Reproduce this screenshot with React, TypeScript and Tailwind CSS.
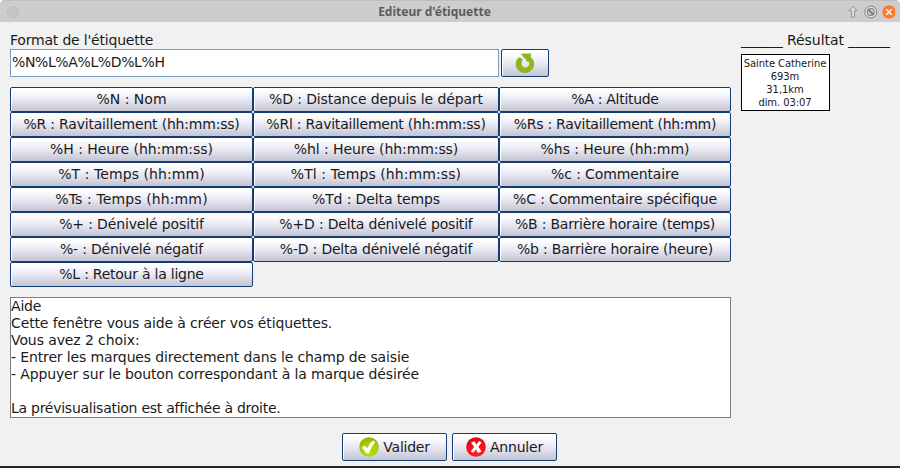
import type { ReactNode } from "react";

type Label = [text: string, tracking: string];

const COLUMNS: Label[][] = [
  [
    ["%N : Nom", ""],
    ["%R : Ravitaillement (hh:mm:ss)", "tracking-[-0.2px]"],
    ["%H : Heure (hh:mm:ss)", "tracking-[-0.05px]"],
    ["%T : Temps (hh:mm)", "tracking-[0.08px]"],
    ["%Ts : Temps (hh:mm)", "tracking-[0.12px]"],
    ["%+ : Dénivelé positif", "tracking-[-0.14px]"],
    ["%- : Dénivelé négatif", "tracking-[-0.2px]"],
    ["%L : Retour à la ligne", "tracking-[-0.24px]"],
  ],
  [
    ["%D : Distance depuis le départ", "tracking-[-0.12px]"],
    ["%Rl : Ravitaillement (hh:mm:ss)", "tracking-[-0.22px]"],
    ["%hl : Heure (hh:mm:ss)", "tracking-[-0.08px]"],
    ["%Tl : Temps (hh:mm:ss)", "tracking-[0.09px]"],
    ["%Td : Delta temps", "tracking-[-0.12px]"],
    ["%+D : Delta dénivelé positif", "tracking-[-0.18px]"],
    ["%-D : Delta dénivelé négatif", "tracking-[-0.2px]"],
  ],
  [
    ["%A : Altitude", "tracking-[-0.3px]"],
    ["%Rs : Ravitaillement (hh:mm)", "tracking-[-0.28px]"],
    ["%hs : Heure (hh:mm)", "tracking-[-0.08px]"],
    ["%c : Commentaire", "tracking-[-0.12px]"],
    ["%C : Commentaire spécifique", "tracking-[-0.15px]"],
    ["%B : Barrière horaire (temps)", "tracking-[-0.2px]"],
    ["%b : Barrière horaire (heure)", "tracking-[-0.2px]"],
  ],
];

const HELP: Label[] = [
  ["Aide", "tracking-[-0.2px]"],
  ["Cette fenêtre vous aide à créer vos étiquettes.", "tracking-[-0.13px]"],
  ["Vous avez 2 choix:", "tracking-[-0.1px]"],
  ["- Entrer les marques directement dans le champ de saisie", "tracking-[-0.13px]"],
  ["- Appuyer sur le bouton correspondant à la marque désirée", "tracking-[-0.13px]"],
  ["", ""],
  ["La prévisualisation est affichée à droite.", "tracking-[-0.26px]"],
];

function MetalButton({ className, children }: { className: string; children: ReactNode }) {
  return (
    <button
      className={`flex shrink-0 items-center justify-center whitespace-nowrap rounded-[2px] border border-[#133c75] bg-linear-to-b from-white from-10% via-[#e9e9f4] via-50% to-[#c4c4d2] shadow-[inset_1px_0_0_#fff] ${className}`}
    >
      {children}
    </button>
  );
}

function RefreshIcon() {
  return (
    <svg width="20" height="20" viewBox="0 0 20 20">
      <path
        d="M6.4 .9 L15.7 .7 L15.6 4.2 A9 8.8 0 1 1 3.6 4.8 Q5 4.4 7.6 6.6 Q6.2 8 6.3 10.4 A4.1 4.1 0 1 0 14.3 9.6 L12.9 8 L12 8.6 L10.6 5.6 L9 4.6 Z"
        fill="#8eb80f"
        stroke="#86a83a"
        strokeWidth=".5"
      />
    </svg>
  );
}

function ValidIcon() {
  return (
    <svg width="20" height="20" viewBox="0 0 20 20">
      <defs>
        <radialGradient id="green" cx=".55" cy=".85" r=".85">
          <stop offset="0" stopColor="#b6dc08" />
          <stop offset=".6" stopColor="#a8cf04" />
          <stop offset="1" stopColor="#8db600" />
        </radialGradient>
      </defs>
      <circle cx="10" cy="10" r="9.8" fill="url(#green)" />
      <path d="M2.9 10.7 L5.7 8.4 Q7.4 9.8 8.4 11.2 Q10.3 6.6 13.8 3.6 L16.3 4.9 Q12.2 9.6 9.8 16.4 H7 Q5.8 12.9 2.9 10.7 Z" fill="#fff" />
    </svg>
  );
}

function CancelIcon() {
  return (
    <svg width="20" height="20" viewBox="0 0 20 20">
      <defs>
        <radialGradient id="red" cx=".55" cy=".8" r=".8">
          <stop offset="0" stopColor="#ff2020" />
          <stop offset=".6" stopColor="#f51318" />
          <stop offset="1" stopColor="#d80b12" />
        </radialGradient>
      </defs>
      <circle cx="10" cy="10" r="9.8" fill="url(#red)" />
      <path d="M5.1 5.5 L8.3 4.2 L10.4 7.4 L13.1 4.1 L15.6 5.5 L12.4 9.8 L15.5 14.4 L12.2 16 L10 12.4 L7.2 15.8 L4.7 14.4 L8.1 9.9 Z" fill="#fff" />
    </svg>
  );
}

function TitleBar() {
  return (
    <header className="flex h-[22px] shrink-0 items-center rounded-t-[5px] border-t border-[#bebebe] bg-[#cdcdcd] pl-[7px] pr-[5px]">
      <span className="mt-px size-3 rounded-full border border-[#bdbdbd] bg-[#c4c4c4]" />
      <h1 className="flex-1 pl-[2px] text-center font-['Noto_Sans',sans-serif] text-[12px] leading-5 font-bold text-[#5c5c5c]">
        Editeur d'étiquette
      </h1>
      <div className="flex items-center">
        <svg width="47" height="14" viewBox="0 0 47 14">
          <path d="M5 1.2 L9 5.7 H6.5 V12 H3.5 V5.7 H1 Z" fill="#dedede" stroke="#929292" strokeLinejoin="round" />
          <circle cx="22.8" cy="7" r="6" fill="#dedede" stroke="#858585" />
          <circle cx="22.8" cy="7" r="3.4" fill="none" stroke="#858585" strokeWidth="1.2" />
          <path d="M20.2 4.4 L25.4 9.6" stroke="#858585" strokeWidth="2.2" />
          <circle cx="41" cy="7" r="6.8" fill="#fc7c2b" />
          <path d="M38.3 4.3 L43.7 9.7 M43.7 4.3 L38.3 9.7" stroke="#fff" strokeWidth="1.4" />
        </svg>
      </div>
    </header>
  );
}

export default function App() {
  return (
    <div className="h-[468px] w-[900px] overflow-hidden bg-white font-['DejaVu_Sans',sans-serif] text-[14px] text-[#1a1a1a]">
      <div className="flex h-full flex-col rounded-t-[5px] border-b-2 border-[#262628] bg-[#f1f1f1]">
        <TitleBar />
        <div className="flex h-[396px] shrink-0 gap-[10px] pl-[10px] pt-[10px]">
          <main className="w-[721px] shrink-0">
            <div className="h-[17px] leading-[17px] tracking-[-0.2px]">Format de l'étiquette</div>
            <div className="flex gap-[2px]">
              <div className="h-7 w-[489px] border border-[#7a99bf] bg-white pl-px leading-[25px] tracking-[-0.38px]">
                %N%L%A%L%D%L%H
              </div>
              <MetalButton className="h-7 w-12"><RefreshIcon /></MetalButton>
            </div>
            <div className="mt-[10px] grid h-[200px] grid-cols-[243px_246px_232px]">
              {COLUMNS.map((column, i) => (
                <div key={i} className="flex flex-col">
                  {column.map(([text, tracking]) => (
                    <MetalButton key={text} className={`h-[25px] leading-[23px] ${tracking}`}>{text}</MetalButton>
                  ))}
                </div>
              ))}
            </div>
            <div className="mt-[10px] h-[121px] border border-[#808080] bg-white leading-[17px]">
              {HELP.map(([text, tracking], i) => (
                <div key={i} className={`h-[17px] whitespace-nowrap ${tracking}`}>{text}</div>
              ))}
            </div>
          </main>
          <aside className="shrink-0">
            <div className="h-[22px] whitespace-nowrap leading-[17px] tracking-[-0.06px]">______ Résultat ______</div>
            <div className="h-[57px] w-[89px] border border-black bg-white pt-[2px] pr-px text-center text-[10px] leading-[13px] tracking-[-0.08px] whitespace-nowrap">
              <div>Sainte Catherine</div>
              <div>693m</div>
              <div>31,1km</div>
              <div>dim. 03:07</div>
            </div>
          </aside>
        </div>
        <footer className="mt-[15px] flex gap-[5px] pl-[342px]">
          <MetalButton className="h-7 w-[105px] gap-1 tracking-[-0.25px]"><ValidIcon />Valider</MetalButton>
          <MetalButton className="h-7 w-[105px] gap-1 tracking-[-0.2px]"><CancelIcon />Annuler</MetalButton>
        </footer>
      </div>
    </div>
  );
}
